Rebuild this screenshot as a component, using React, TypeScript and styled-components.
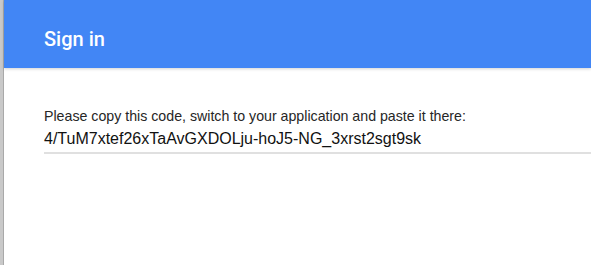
import React from "react";
import styled, { createGlobalStyle } from "styled-components";

const GlobalStyle = createGlobalStyle`
  html, body {
    margin: 0;
    padding: 0;
    background: #ffffff;
    overflow: hidden;
  }
`;

const Screen = styled.div`
  display: flex;
  width: 591px;
  height: 265px;
`;

const BackWindow = styled.div`
  width: 3px;
  background: #c9c9c9;
  border-right: 1px solid #a9a9a9;
`;

const Dialog = styled.div`
  flex: 1;
  display: flex;
  flex-direction: column;
  background: #ffffff;
`;

const Header = styled.header`
  height: 68px;
  box-sizing: border-box;
  display: flex;
  align-items: center;
  padding: 9px 0 0 40px;
  background: #4286f5;
  box-shadow: 0 1px 3px rgba(0, 0, 0, 0.18);
  position: relative;
  z-index: 1;
`;

const Title = styled.h1`
  margin: 0;
  font-family: Roboto, "Liberation Sans", sans-serif;
  font-weight: 500;
  font-size: 20px;
  color: #ffffff;
`;

const Body = styled.div`
  padding: 40px 0 0 40px;
  display: flex;
  flex-direction: column;
`;

const Label = styled.p`
  margin: 0;
  font-family: "Liberation Sans", Arial, sans-serif;
  font-size: 14.2px;
  line-height: 17px;
  color: #262626;
`;

const CodeField = styled.div`
  margin-top: 4px;
  padding-bottom: 3px;
  border-bottom: 2px solid #e0e0e0;
  font-family: "Liberation Sans", Arial, sans-serif;
  font-size: 16px;
  line-height: 20px;
  color: #111111;
`;

function App() {
  return (
    <>
      <GlobalStyle />
      <Screen>
        <BackWindow />
        <Dialog>
          <Header>
            <Title>Sign in</Title>
          </Header>
          <Body>
            <Label>
              Please copy this code, switch to your application and paste it there:
            </Label>
            <CodeField>4/TuM7xtef26xTaAvGXDOLju-hoJ5-NG_3xrst2sgt9sk</CodeField>
          </Body>
        </Dialog>
      </Screen>
    </>
  );
}

export default App;
